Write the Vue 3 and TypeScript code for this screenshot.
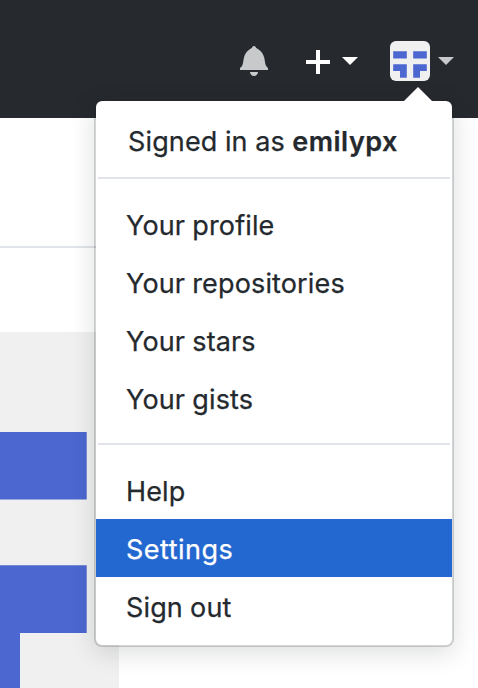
<script setup lang="ts">
interface MenuItem {
  label: string
  active?: boolean
}

const username = 'emilypx'

const groups: MenuItem[][] = [
  [
    { label: 'Your profile' },
    { label: 'Your repositories' },
    { label: 'Your stars' },
    { label: 'Your gists' },
  ],
  [{ label: 'Help' }, { label: 'Settings', active: true }, { label: 'Sign out' }],
]
</script>

<template>
  <div class="page">
    <header class="topbar">
      <svg class="bell" viewBox="0 0 14 16" aria-hidden="true">
        <path
          d="M14 12v1H0v-1l.73-.58c.77-.77.81-2.55 1.19-4.42C2.69 3.23 6 2 6 2c0-.55.45-1 1-1s1 .45 1 1c0 0 3.39 1.23 4.16 5 .38 1.88.42 3.66 1.19 4.42l.66.58H14zm-7 4c1.11 0 2-.89 2-2H5c0 1.11.89 2 2 2z"
        />
      </svg>
      <svg class="plus" viewBox="0 0 12 16" aria-hidden="true">
        <path d="M12 9H7v5H5V9H0V7h5V2h2v5h5v2z" />
      </svg>
      <span class="caret caret-new"></span>
      <svg class="avatar" viewBox="0 0 40 40" aria-hidden="true">
        <rect width="40" height="40" rx="6" fill="#f0f0f0" />
        <path
          fill="#4c67d0"
          d="M3.2 10.2h13.6v7.3H3.2zM23.2 10.2h13.6v7.3H23.2zM3.2 23.2h13.6v13.6H10v-6.8H3.2zM23.2 23.2h13.6V30H30v6.8h-6.8z"
        />
      </svg>
      <span class="caret caret-user"></span>
    </header>

    <main class="content">
      <div class="tabs"></div>
      <div class="portrait">
        <svg viewBox="0 0 119 356" aria-hidden="true">
          <path fill="#4c67d0" d="M0 100h86.7v67.6H0zM0 233.3h86.7V301H20v55H0z" />
        </svg>
      </div>
    </main>

    <nav class="menu">
      <div class="signed-in">Signed in as <strong>{{ username }}</strong></div>
      <template v-for="(group, index) in groups" :key="index">
        <div class="divider"></div>
        <ul class="group">
          <li v-for="item in group" :key="item.label" class="item" :class="{ active: item.active }">
            {{ item.label }}
          </li>
        </ul>
      </template>
    </nav>
  </div>
</template>

<style>
body {
  background: #fff;
}
</style>

<style scoped>
.page {
  position: relative;
  width: 478px;
  height: 688px;
  overflow: hidden;
  box-sizing: border-box;
  background: #fff;
  color: #24292e;
  font-family: Inter, "Liberation Sans", sans-serif;
  font-size: 27px;
  letter-spacing: 0.14px;
  word-spacing: -0.6px;
  -webkit-text-stroke: 0.25px currentColor;
}

.topbar {
  display: flex;
  align-items: flex-start;
  height: 118px;
  box-sizing: border-box;
  padding: 41px 0 0 240px;
  background: #26292e;
}

.bell {
  width: 28px;
  height: 32px;
  margin-top: 3px;
  fill: #c8c9cb;
}

.plus {
  width: 24px;
  height: 32px;
  margin: 5px 0 0 38px;
  fill: #fff;
}

.caret {
  border: 8px solid transparent;
  border-bottom-width: 0;
  margin-top: 16px;
}

.caret-new {
  margin-left: 12px;
  border-top-color: #fff;
}

.avatar {
  width: 40px;
  height: 40px;
  margin-left: 32px;
}

.caret-user {
  margin-left: 8px;
  border-top-color: #c8c9cb;
}

.tabs {
  height: 128px;
  border-bottom: 2px solid #e1e4e8;
}

.content {
  width: 119px;
}

.portrait {
  height: 356px;
  margin-top: 84px;
  background: #f0f0f0;
}

.portrait svg {
  display: block;
  width: 119px;
  height: 356px;
}

.menu {
  position: absolute;
  top: 99px;
  left: 94px;
  width: 360px;
  height: 548px;
  box-sizing: border-box;
  border: 2px solid rgba(27, 31, 35, 0.19);
  border-radius: 8px;
  background: #fff;
  background-clip: padding-box;
  box-shadow: 0 6px 24px rgba(27, 31, 35, 0.15);
}

.menu::before {
  content: "";
  position: absolute;
  top: -14px;
  right: 20px;
  border: 14px solid transparent;
  border-top-width: 0;
  border-bottom-color: #fff;
}

.signed-in {
  height: 76px;
  box-sizing: border-box;
  padding: 20px 0 0 32px;
  line-height: 42px;
  word-spacing: -0.3px;
  white-space: nowrap;
}

.signed-in strong {
  font-weight: 600;
  letter-spacing: 0.5px;
}

.divider {
  height: 2px;
  margin: 0 2px;
  background: #e1e4e8;
}

.group {
  margin: 0;
  padding: 16px 0;
  list-style: none;
}

.item {
  height: 58px;
  padding-left: 30px;
  line-height: 62px;
  white-space: nowrap;
}

.active {
  background: #2368d0;
  color: #fff;
  letter-spacing: 0.5px;
}
</style>
